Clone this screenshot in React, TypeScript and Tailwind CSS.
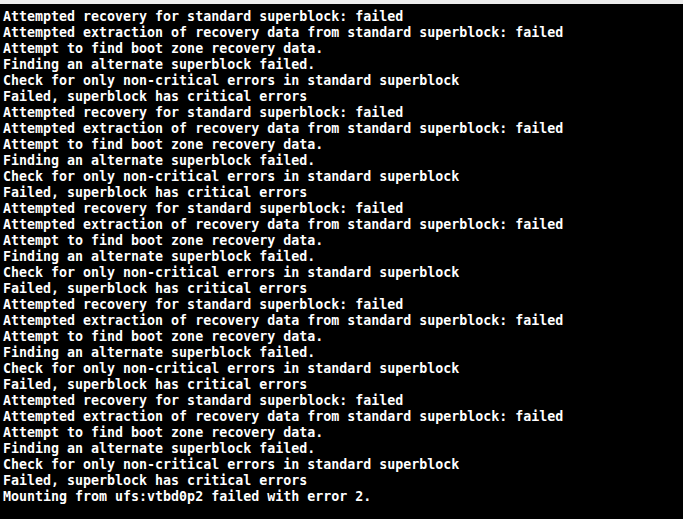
const block = [
  "Attempted recovery for standard superblock: failed",
  "Attempted extraction of recovery data from standard superblock: failed",
  "Attempt to find boot zone recovery data.",
  "Finding an alternate superblock failed.",
  "Check for only non-critical errors in standard superblock",
  "Failed, superblock has critical errors",
];

const lines: string[] = [];
for (let i = 0; i < 5; i++) lines.push(...block);
lines.push("Mounting from ufs:vtbd0p2 failed with error 2.");

export default function App() {
  return (
    <div className="w-[683px] h-[519px] bg-[#ececec] pt-[4px] overflow-hidden">
      <div
        className="h-[515px] bg-black pt-[5px] pl-[3px] text-white font-bold text-[13.3px] leading-[16px] whitespace-pre"
        style={{ fontFamily: '"DejaVu Sans Mono", monospace' }}
      >
        {lines.map((l, i) => (
          <div key={i}>{l}</div>
        ))}
      </div>
    </div>
  );
}
